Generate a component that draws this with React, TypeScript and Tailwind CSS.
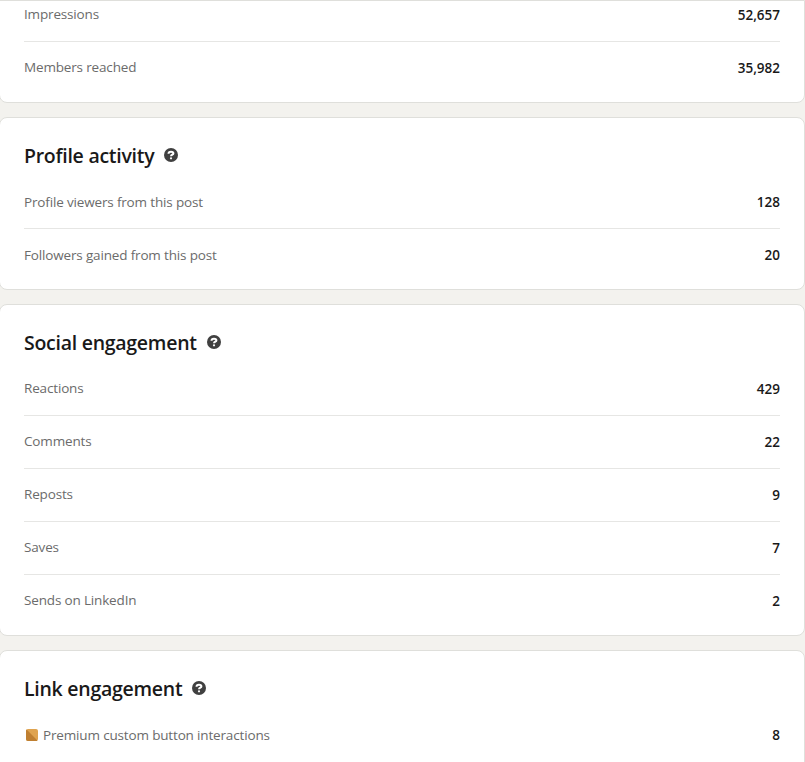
import clsx from "clsx";

type Metric = {
  label: string;
  value: string;
  premium?: boolean;
};

type Section = {
  id: string;
  title: string;
  raised?: boolean;
  metrics: Metric[];
};

const discovery: Metric[] = [
  { label: "Impressions", value: "52,657" },
  { label: "Members reached", value: "35,982" },
];

const sections: Section[] = [
  {
    id: "profile",
    title: "Profile activity",
    metrics: [
      { label: "Profile viewers from this post", value: "128" },
      { label: "Followers gained from this post", value: "20" },
    ],
  },
  {
    id: "social",
    title: "Social engagement",
    raised: true,
    metrics: [
      { label: "Reactions", value: "429" },
      { label: "Comments", value: "22" },
      { label: "Reposts", value: "9" },
      { label: "Saves", value: "7" },
      { label: "Sends on LinkedIn", value: "2" },
    ],
  },
  {
    id: "link",
    title: "Link engagement",
    metrics: [{ label: "Premium custom button interactions", value: "8", premium: true }],
  },
];

const HelpIcon = () => (
  <svg viewBox="0 0 16 16" aria-hidden="true" className="mb-0.5 size-4">
    <circle cx="8" cy="8" r="7" fill="#404040" />
    <path d="M5.5 6.7C5.5 5.300 6.500 4.800 8 4.800s2.400.6 2.400 1.700C10.400 7.800 8 7.700 8 9.300" fill="none" stroke="#fff" strokeWidth="2" />
    <circle cx="8" cy="11.300" r="1.100" fill="#fff" />
  </svg>
);

const PremiumIcon = () => (
  <svg viewBox="0 0 12 12" aria-hidden="true" className="mr-[5px] ml-0.5 size-3">
    <rect width="12" height="12" rx="2" fill="#dfa34f" />
    <path d="M.6.6l10.800 10.800A2 2 0 0 1 10 12H2a2 2 0 0 1-2-2V2A2 2 0 0 1 .6.6z" fill="#bf7f31" />
  </svg>
);

const MetricRow = ({ label, value, premium, raised }: Metric & { raised?: boolean }) => (
  <li className="flex h-[53px] items-center justify-between border-b border-[#e6e6e4] last:border-transparent">
    <span className={clsx("flex items-center text-[13.5px]/5 tracking-[-0.16px] text-[#6b6b6b]", raised && "pb-0.5")}>
      {premium && <PremiumIcon />}
      {label}
    </span>
    <span className="text-[13.5px]/5 font-[560] text-[#191919]">{value}</span>
  </li>
);

const SectionCard = ({ title, metrics, raised }: Section) => (
  <section className="-ml-px rounded-lg border border-[#dfdfdb] bg-white px-6 pb-[7px]">
    <div className="flex h-[58px] items-center gap-[9px] pt-[17px]">
      <h2 className="text-[19.5px]/7 font-[550] tracking-[-0.27px] text-[#191919]">{title}</h2>
      <HelpIcon />
    </div>
    <ul>
      {metrics.map((metric) => (
        <MetricRow key={metric.label} raised={raised} {...metric} />
      ))}
    </ul>
  </section>
);

const App = () => {
  return (
    <main className="flex h-[762px] flex-col gap-3.5 overflow-hidden bg-[#f3f2ee] font-['Open_Sans','Noto_Sans',sans-serif]">
      <section className="-ml-px h-[103px] shrink-0 overflow-hidden rounded-b-lg border border-[#dfdfdb] bg-white px-6">
        <ul className="-mt-3">
          {discovery.map((metric) => (
            <MetricRow key={metric.label} raised {...metric} />
          ))}
        </ul>
      </section>
      {sections.map((section) => (
        <SectionCard key={section.id} {...section} />
      ))}
    </main>
  );
};

export default App;
